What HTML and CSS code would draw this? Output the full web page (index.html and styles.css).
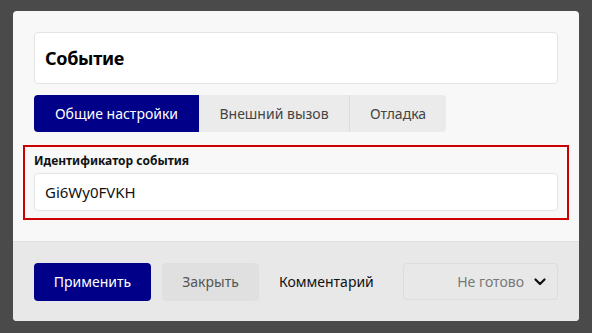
FILE: index.html
```html
<!DOCTYPE html>
<html lang="ru">

<head>
  <meta charset="UTF-8">
  <meta name="viewport" content="width=device-width, initial-scale=1.0">
  <title>Событие</title>
  <link rel="stylesheet" href="styles.css">
</head>

<body>
  <div class="modal">
    <div class="modal-body">
      <input class="title-input" type="text" value="Событие">

      <div class="tabs">
        <div class="tab active">Общие настройки</div>
        <div class="tab">Внешний вызов</div>
        <div class="tab">Отладка</div>
      </div>

      <div class="field-box">
        <label for="event-id">Идентификатор события</label>
        <input class="text-input" type="text" id="event-id" value="Gi6Wy0FVKH">
      </div>
    </div>

    <div class="modal-footer">
      <button class="button primary">Применить</button>
      <button class="button secondary">Закрыть</button>
      <span class="comment-link">Комментарий</span>
      <div class="status-select">
        <span>Не готово</span>
        <svg width="12" height="8" viewBox="0 0 12 8">
          <path d="M1.5 1.5 L6 6 L10.5 1.5" fill="none" stroke="#111" stroke-width="2.2" stroke-linecap="round" stroke-linejoin="round"/>
        </svg>
      </div>
    </div>
  </div>
</body>

</html>
```

FILE: styles.css
```css
body {
  font-family: "Noto Sans", "Open Sans", sans-serif;
  background-color: #4a4a4a;
  margin: 0;
  padding: 11px 0 0 13px;
}

.modal {
  width: 566px;
  height: 310px;
  background-color: #f8f8f8;
  border-radius: 4px;
  overflow: hidden;
  display: flex;
  flex-direction: column;
}

.modal-body {
  padding: 21px 21px 21px 21px;
}

.title-input {
  display: block;
  box-sizing: border-box;
  width: 524px;
  height: 52px;
  margin: 0 0 11px 0;
  padding: 0 10px;
  font-family: inherit;
  font-size: 18px;
  font-weight: bold;
  letter-spacing: -0.3px;
  color: #000;
  background-color: #fff;
  border: 1px solid #e4e4e4;
  border-radius: 4px;
}

.tabs {
  display: flex;
  height: 37px;
  margin-bottom: 13px;
}

.tab {
  display: flex;
  align-items: center;
  justify-content: center;
  font-size: 14px;
  color: #444;
  background-color: #ebebeb;
}

.tab:nth-child(1) {
  width: 165px;
  border-radius: 4px 0 0 4px;
}

.tab:nth-child(2) {
  width: 150px;
  border-right: 1px solid #dcdcdc;
}

.tab:nth-child(3) {
  width: 96px;
  border-radius: 0 4px 4px 0;
}

.tab.active {
  background-color: #000088;
  color: #fff;
}

.field-box {
  margin: 0 -11px;
  padding: 5px 9px 7px;
  border: 2px solid #cc0000;
}

.field-box label {
  display: block;
  font-size: 12px;
  font-weight: bold;
  line-height: 18px;
  color: #111;
  margin-bottom: 3px;
}

.text-input {
  display: block;
  box-sizing: border-box;
  width: 100%;
  height: 38px;
  padding: 0 10px;
  font-family: inherit;
  font-size: 15px;
  color: #111;
  background-color: #fff;
  border: 1px solid #e4e4e4;
  border-radius: 4px;
}

.modal-footer {
  flex: 1;
  display: flex;
  align-items: center;
  padding: 0 21px;
  background-color: #e8e8e8;
  border-top: 1px solid #dedede;
}

.button {
  height: 38px;
  font-family: inherit;
  font-size: 14px;
  border: none;
  border-radius: 4px;
  padding: 0;
}

.primary {
  width: 117px;
  background-color: #000088;
  color: #fff;
  margin-right: 11px;
}

.secondary {
  width: 97px;
  background-color: #e0e0e0;
  color: #555;
  margin-right: 20px;
}

.comment-link {
  font-size: 14px;
  color: #111;
}

.status-select {
  margin-left: auto;
  box-sizing: border-box;
  width: 155px;
  height: 37px;
  display: flex;
  align-items: center;
  justify-content: flex-end;
  gap: 10px;
  padding-right: 11px;
  font-size: 14px;
  color: #777;
  border: 1px solid #dcdcdc;
  border-radius: 4px;
}
```
